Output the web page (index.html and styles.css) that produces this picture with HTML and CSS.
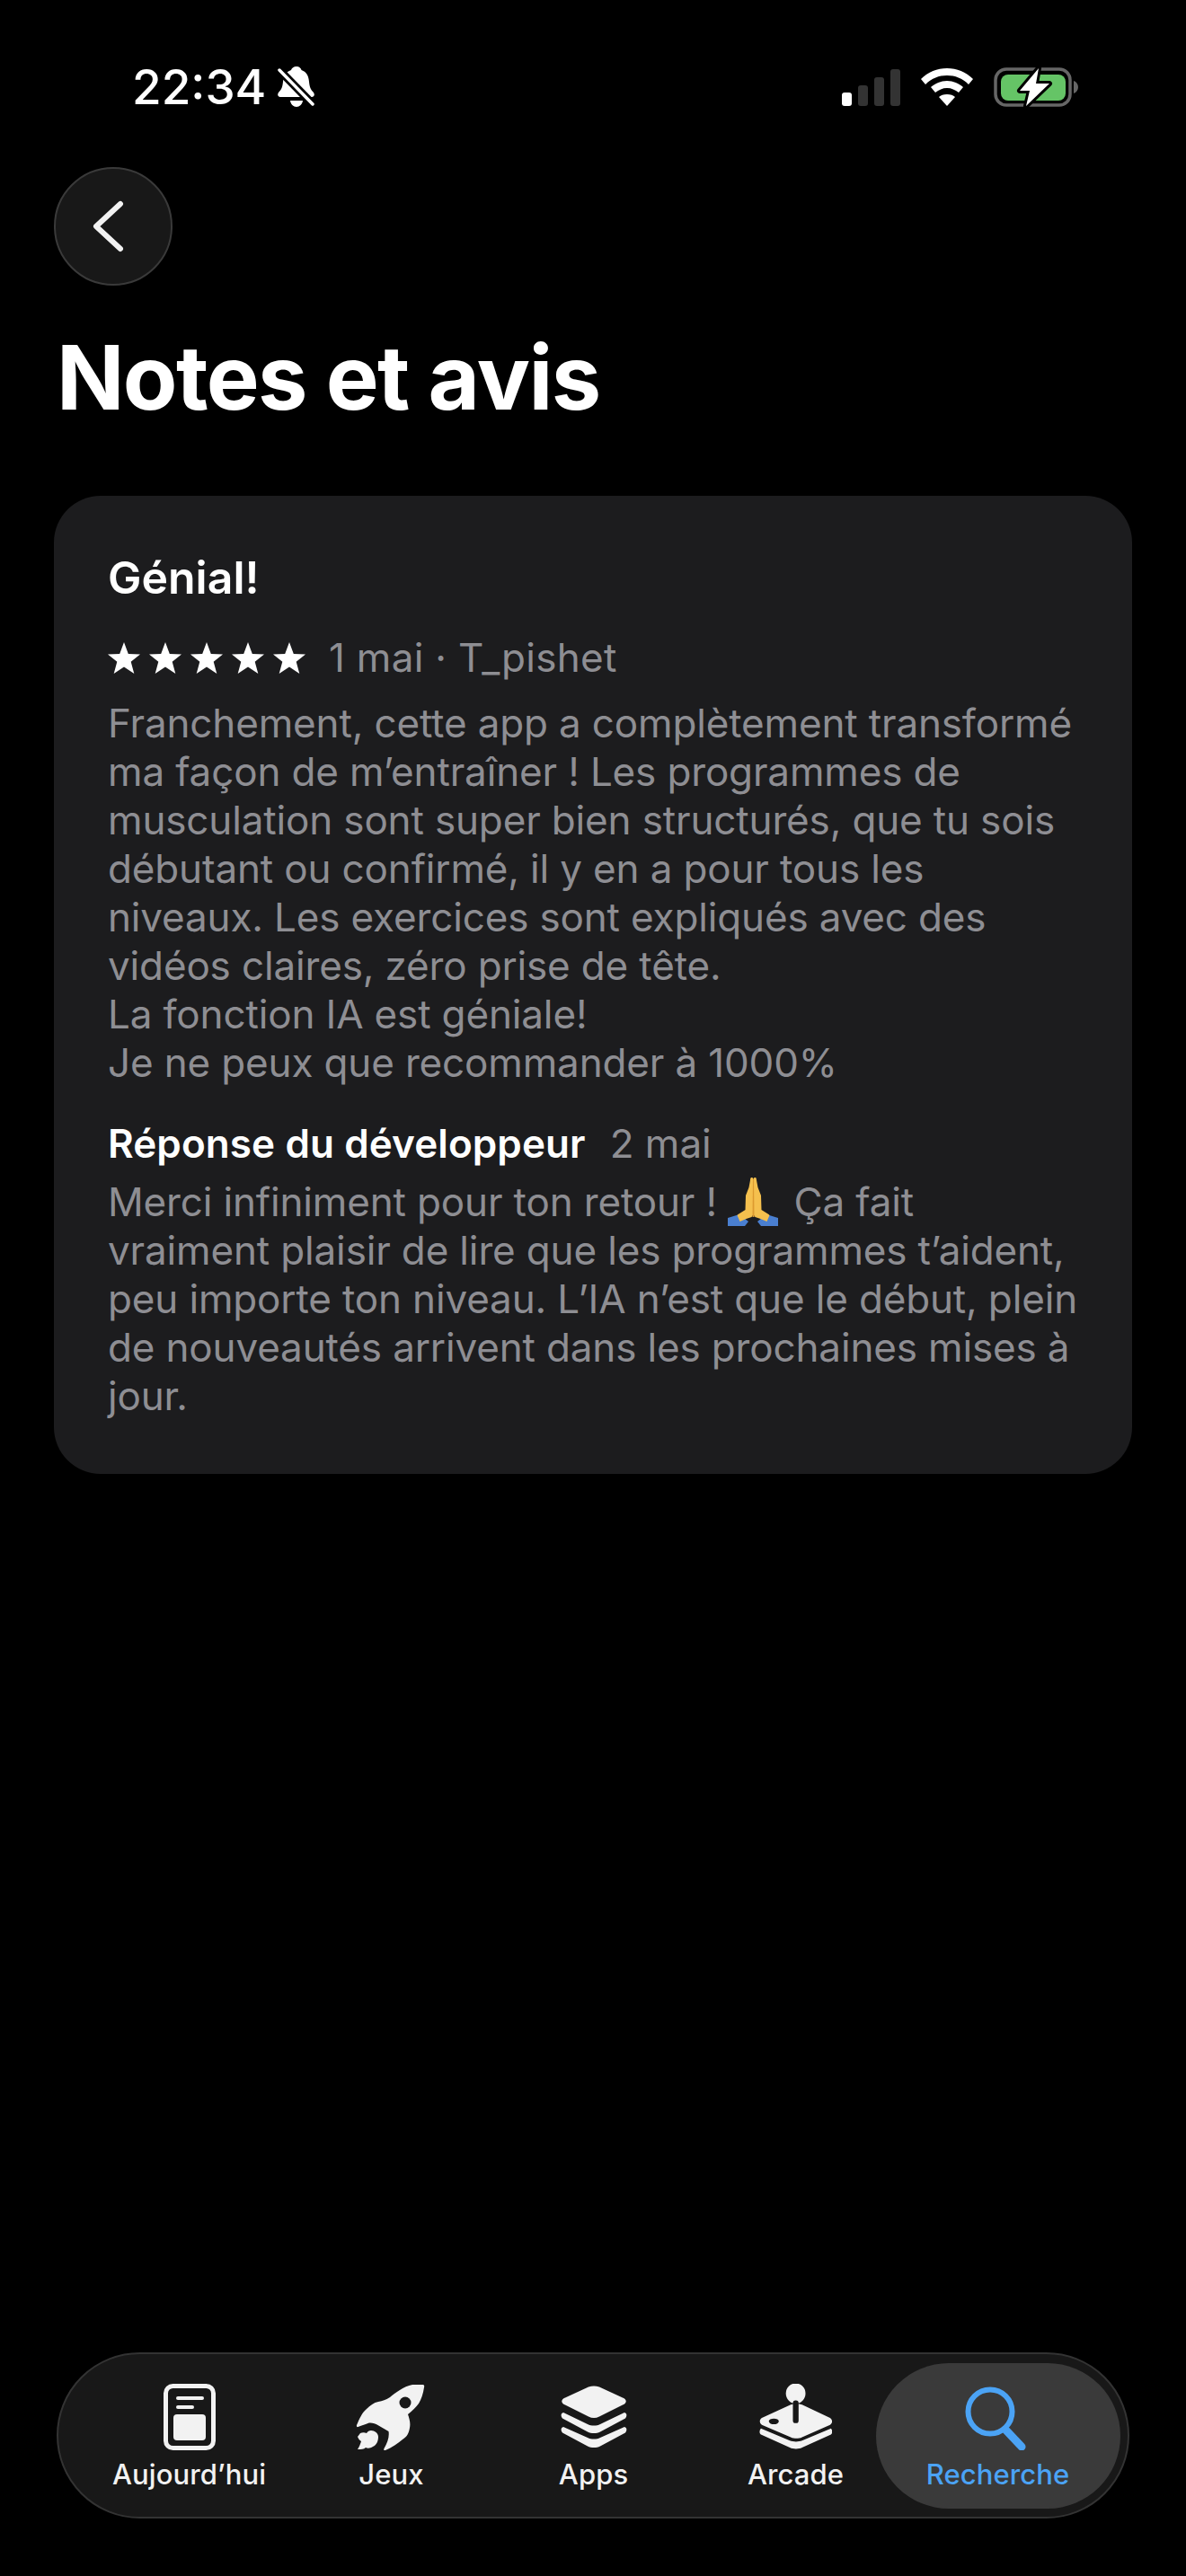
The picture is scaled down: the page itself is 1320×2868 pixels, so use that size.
FILE: index.html

```html
<!DOCTYPE html>
<html lang="fr">
<head>
  <meta charset="utf-8">
  <title>Notes et avis</title>
  <link rel="stylesheet" href="styles.css">
</head>
<body>
  <div class="status-bar">
    <div class="status-left">
      <span class="time">22:34</span>
      <svg class="bell" viewBox="0 0 42 46">
        <path fill="#fff" d="M22 0c3 0 5 2 5.500 4 6 2 8 7 8.500 13 .5 6 2 9 5 12 1.500 2 1 5-2 5H4c-3 0-3.500-3-2-5 3-3 4.500-6 5-12 .5-6 3-11 9-13 .5-2 3-4 6-4zM15 38h14c-.5 4-3.500 7-7 7s-6.500-3-7-7z"/>
        <path stroke="#000" stroke-width="9" d="M0 1l42 43"/>
        <path stroke="#fff" stroke-width="3.500" stroke-linecap="round" d="M3 4l37 38"/>
      </svg>
    </div>
    <div class="status-right">
      <svg class="signal" viewBox="0 0 65 41">
        <rect x="0" y="26" width="11" height="15" rx="3" fill="#fff"/>
        <rect x="18" y="18" width="11" height="23" rx="3" fill="#333"/>
        <rect x="36" y="9" width="11" height="32" rx="3" fill="#333"/>
        <rect x="54" y="0" width="11" height="41" rx="3" fill="#333"/>
      </svg>
      <svg class="wifi" viewBox="0 0 58 42">
        <path fill="#fff" d="M29 0c11 0 21 4 29 12l-5 6C46 11 38 8 29 8s-17 3-24 10l-5-6C8 4 18 0 29 0z"/>
        <path fill="#fff" d="M29 14c7 0 13 3 18 7l-5 6c-4-3-8-5-13-5s-9 2-13 5l-5-6c5-4 11-7 18-7z"/>
        <path fill="#fff" d="M29 29c4 0 7 1 9 3L29 42 20 32c2-2 5-3 9-3z"/>
      </svg>
      <svg class="battery" viewBox="0 0 94 46">
        <rect x="2" y="3" width="83" height="40" rx="12" fill="none" stroke="#666" stroke-width="3.500"/>
        <rect x="8" y="9" width="72" height="29" rx="8" fill="#65c466"/>
        <path fill="#666" d="M89 16c3 1 5 4 5 7s-2 6-5 7z"/>
        <path fill="#fff" stroke="#000" stroke-width="6" stroke-linejoin="round" paint-order="stroke" d="M50 2 29 27h11l-4 17 26-25H47z"/>
      </svg>
    </div>
  </div>

  <div class="back-btn">
    <svg class="back-icon" viewBox="0 0 36 58">
      <path d="M31 4 4 29l27 25" fill="none" stroke="#f2f2f2" stroke-width="6" stroke-linecap="round" stroke-linejoin="round"/>
    </svg>
  </div>

  <h1 class="page-title">Notes et avis</h1>

  <div class="review-card">
    <div class="review-title">Génial!</div>
    <div class="review-meta">
      <div class="stars">
        <svg viewBox="0 0 36 35"><path d="M18 0l4.800 12.900L36 13.400 25.700 21.800 29.300 35 18 27.400 6.700 35l3.600-13.200L0 13.400l13.200-.5z"/></svg>
        <svg viewBox="0 0 36 35"><path d="M18 0l4.800 12.900L36 13.400 25.700 21.800 29.300 35 18 27.400 6.700 35l3.600-13.200L0 13.400l13.200-.5z"/></svg>
        <svg viewBox="0 0 36 35"><path d="M18 0l4.800 12.900L36 13.400 25.700 21.800 29.300 35 18 27.400 6.700 35l3.600-13.200L0 13.400l13.200-.5z"/></svg>
        <svg viewBox="0 0 36 35"><path d="M18 0l4.800 12.900L36 13.400 25.700 21.800 29.300 35 18 27.400 6.700 35l3.600-13.200L0 13.400l13.200-.5z"/></svg>
        <svg viewBox="0 0 36 35"><path d="M18 0l4.800 12.900L36 13.400 25.700 21.800 29.300 35 18 27.400 6.700 35l3.600-13.200L0 13.400l13.200-.5z"/></svg>
      </div>
      <span class="review-date">1 mai · T_pishet</span>
    </div>
    <p class="review-body">Franchement, cette app a complètement transformé<br>ma façon de m’entraîner ! Les programmes de<br>musculation sont super bien structurés, que tu sois<br>débutant ou confirmé, il y en a pour tous les<br>niveaux. Les exercices sont expliqués avec des<br>vidéos claires, zéro prise de tête.<br>La fonction IA est géniale!<br>Je ne peux que recommander à 1000%</p>
    <div class="reply-head">
      <span class="reply-label">Réponse du développeur</span>
      <span class="reply-date">2 mai</span>
    </div>
    <p class="review-body">Merci infiniment pour ton retour !
      <svg class="pray" viewBox="20 14 56 54">
        <path fill="#4a7fd0" d="M20 59l13-4 10 8-4 5H20z"/>
        <path fill="#4a7fd0" d="M76 59l-13-4-10 8 4 5h19z"/>
        <path fill="#f5c04e" d="M45 17c0-4 3-4 3.500-1 .5-3 3.500-3 3.500 1l1.500 8 3.500 9 .5 16 8 5 1 1-3 7-7-3-6-2-2-3-2 3-6 2-7 3-3-7 1-1 8-5 .5-16 3.500-9z"/>
        <path fill="#dd9a30" d="M48 16h1l.5 42h-2z"/>
      </svg>
      Ça fait<br>vraiment plaisir de lire que les programmes t’aident,<br>peu importe ton niveau. L’IA n’est que le début, plein<br>de nouveautés arrivent dans les prochaines mises à<br>jour.</p>
  </div>

  <nav class="tab-bar">
    <div class="tab">
      <svg class="tab-icon" viewBox="0 0 58 74">
        <rect x="2.500" y="2.500" width="53" height="69" rx="8" fill="none" stroke="#f2f2f2" stroke-width="5"/>
        <rect x="14" y="14" width="31" height="4" rx="2" fill="#f2f2f2"/>
        <rect x="14" y="24" width="20" height="4" rx="2" fill="#f2f2f2"/>
        <rect x="11" y="34" width="36" height="29" rx="4" fill="#f2f2f2"/>
      </svg>
      <span class="tab-label">Aujourd’hui</span>
    </div>
    <div class="tab">
      <svg class="tab-icon" viewBox="5 8 80 74">
        <path fill="#f2f2f2" d="M79 9c2-.5 2.500 1 2 3-1 7-3 13-6 18-3 4-7 8-12 12 2 6 3 10 2 15-1 6-3 10-8 13-5 4-12 9-19 12-2 1-2-1-1.500-2 4-7 6-13 5-19l-12-7c-3-2-8-3-11-2-3 1-8 3-11 4-1 .5-2-.5-1.500-2 3-7 6-14 11-18 4-4 8-7 13-8 5-1 8-2 13-5 6-5 15-12 25-14z"/>
        <circle cx="60" cy="29" r="6.500" fill="#181818"/>
        <path fill="#f2f2f2" d="M10 63c2-1 5-1 7 0 1-2 3-3 5-3 4 0 8 3 8 7 0 5-2 9-6 11-3 2-6 2-8 1-2 2-5 2-9 2 2-3 3-6 4-9-2-1-3-3-4-5 1-1 2-3 3-4z"/>
      </svg>
      <span class="tab-label">Jeux</span>
    </div>
    <div class="tab">
      <svg class="tab-icon" viewBox="12 9.500 74 74">
        <path fill="#f2f2f2" d="M43 13c4-1.500 8-1.500 12 0l26 12c5 2 5 6 0 8L55 46c-4 2-8 2-12 0L17 33c-5-2-5-6 0-8z"/>
        <path fill="#f2f2f2" d="M15 41.500l27 13c4 2 10 2 14 0l27-13c3 1 3 4 1 6.500L56 63c-4 2-10 2-14 0L14 48c-2-2.500-2-5.500 1-6.500z"/>
        <path fill="#f2f2f2" d="M15 57.500l27 12c4 2 10 2 14 0l27-12c3 1 3 4 1 6.500L56 79c-4 2-10 2-14 0L14 64c-2-2.500-2-5.500 1-6.500z"/>
      </svg>
      <span class="tab-label">Apps</span>
    </div>
    <div class="tab">
      <svg class="tab-icon" viewBox="6 9 84 76">
        <ellipse cx="47.700" cy="20" rx="11.200" ry="11.500" fill="#f2f2f2"/>
        <path fill="#f2f2f2" d="M42 33c4-1.500 9-1.500 13 0l32 15c3 2 3 6 0 8L55 70c-4 2-9 2-13 0L9 56c-3-2-3-6 0-8z"/>
        <rect x="44.500" y="28" width="6.500" height="26" rx="3" fill="#181818"/>
        <ellipse cx="22.700" cy="52" rx="5.700" ry="3.300" fill="#181818"/>
        <path fill="#f2f2f2" d="M8 60l33 14c4 1.500 10 1.500 14 0l33-14c2 2 2 6 0 7L55 82c-4 2-10 2-14 0L8 67c-2-1-2-5 0-7z"/>
      </svg>
      <span class="tab-label">Arcade</span>
    </div>
    <div class="tab tab-active">
      <svg class="tab-icon" viewBox="0 0 74 74">
        <circle cx="28" cy="31" r="24.500" fill="none" stroke="#4ba3f5" stroke-width="6"/>
        <path d="M46 52l17 18" fill="none" stroke="#4ba3f5" stroke-width="9" stroke-linecap="round"/>
      </svg>
      <span class="tab-label">Recherche</span>
    </div>
  </nav>
</body>
</html>
```

FILE: styles.css

```css
* {
  box-sizing: border-box;
}

body {
  width: 1320px;
  height: 2868px;
  margin: 0;
  padding: 0 60px 64px;
  display: flex;
  flex-direction: column;
  align-items: flex-start;
  background: #000;
  color: #fff;
  font-family: Inter, "Liberation Sans", sans-serif;
  overflow: hidden;
}

.status-bar {
  width: 100%;
  height: 126px;
  padding: 74px 0 0 87px;
  display: flex;
  justify-content: space-between;
  align-items: flex-start;
}

.status-left {
  display: flex;
  align-items: center;
  gap: 12px;
}

.time {
  font-size: 53px;
  font-weight: 500;
  line-height: 46px;
}

.bell {
  width: 42px;
  height: 46px;
}

.status-right {
  display: flex;
  align-items: center;
  gap: 23px;
  padding-right: 60px;
}

.signal {
  width: 65px;
  height: 41px;
}

.wifi {
  width: 58px;
  height: 42px;
}

.battery {
  width: 94px;
  height: 46px;
}

.back-btn {
  width: 132px;
  height: 132px;
  margin-top: 60px;
  border-radius: 50%;
  border: 2px solid #3a3a3a;
  background: #181818;
  display: flex;
  align-items: center;
  justify-content: center;
}

.back-icon {
  width: 36px;
  height: 58px;
  margin-right: 10px;
}

.page-title {
  margin: 42px 0 0 3px;
  font-size: 99px;
  font-weight: 700;
  line-height: 120px;
  letter-spacing: -1.6px;
}

.review-card {
  width: 1200px;
  margin-top: 72px;
  padding: 61px 60px 60px;
  background: #1c1c1e;
  border-radius: 52px;
  white-space: nowrap;
}

.review-title {
  font-size: 50px;
  font-weight: 600;
  line-height: 60px;
}

.review-meta {
  display: flex;
  align-items: center;
  gap: 26px;
  margin-top: 32px;
}

.stars {
  display: flex;
  gap: 10px;
}

.stars svg {
  width: 36px;
  height: 35px;
  fill: #fff;
}

.review-date,
.reply-date {
  color: #8e8e93;
  font-size: 44px;
  font-weight: 370;
  line-height: 54px;
}

.review-date {
  letter-spacing: 0.3px;
}

.review-body {
  margin: 19px 0 0;
  color: #8e8e93;
  font-size: 44px;
  font-weight: 370;
  line-height: 54px;
  letter-spacing: -0.15px;
}

.reply-head {
  display: flex;
  align-items: baseline;
  gap: 27px;
  margin-top: 36px;
}

.reply-label {
  font-size: 44px;
  font-weight: 600;
  line-height: 54px;
  letter-spacing: 0.1px;
}

.reply-head + .review-body {
  margin-top: 11px;
}

.pray {
  width: 56px;
  height: 54px;
  margin: -11px 5px -11px 0;
  vertical-align: baseline;
}

.tab-bar {
  width: 1194px;
  height: 185px;
  margin: auto 0 0 3px;
  padding: 10px 33px;
  display: flex;
  background: #181818;
  border: 2px solid #333;
  border-radius: 93px;
}

.tab {
  width: 225px;
  height: 162px;
  padding-top: 23px;
  flex: none;
  display: flex;
  flex-direction: column;
  align-items: center;
}

.tab-icon {
  height: 74px;
}

.tab-label {
  margin-top: 8px;
  color: #f2f2f2;
  font-size: 31px;
  font-weight: 450;
  line-height: 38px;
  letter-spacing: 0.1px;
}

.tab-active {
  width: 272px;
  margin: 0 -23.5px;
  background: #3a3a3a;
  border-radius: 81px;
}

.tab-active .tab-label {
  color: #4ba3f5;
  font-weight: 550;
}
```
